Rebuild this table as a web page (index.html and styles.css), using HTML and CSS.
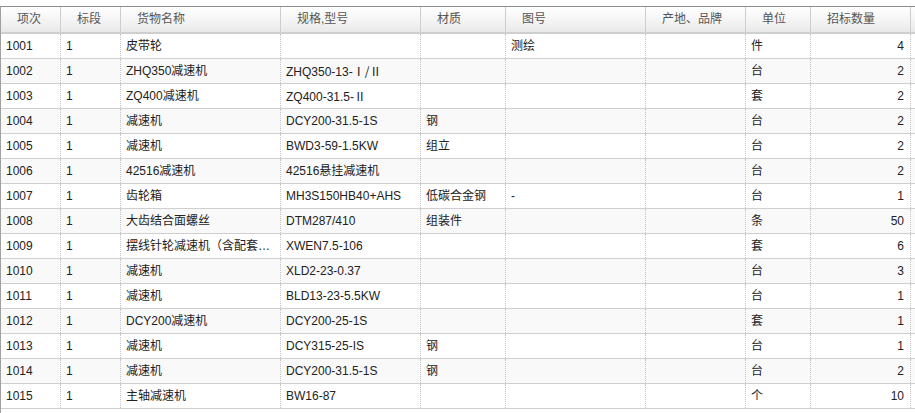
FILE: index.html
```html
<!DOCTYPE html>
<html lang="zh">
<head>
<meta charset="utf-8">
<link rel="stylesheet" href="styles.css">
</head>
<body>
<div class="grid">
  <div class="row head">
    <div class="cell">项次</div>
    <div class="cell">标段</div>
    <div class="cell">货物名称</div>
    <div class="cell">规格,型号</div>
    <div class="cell">材质</div>
    <div class="cell">图号</div>
    <div class="cell">产地、品牌</div>
    <div class="cell">单位</div>
    <div class="cell">招标数量</div>
    <div class="cell"></div>
  </div>
  <div class="row">
    <div class="cell">1001</div><div class="cell">1</div><div class="cell">皮带轮</div><div class="cell"></div><div class="cell"></div><div class="cell">测绘</div><div class="cell"></div><div class="cell">件</div><div class="cell num">4</div><div class="cell"></div>
  </div>
  <div class="row alt">
    <div class="cell">1002</div><div class="cell">1</div><div class="cell">ZHQ350减速机</div><div class="cell">ZHQ350-13-<span class="cjk">Ⅰ/Ⅱ</span></div><div class="cell"></div><div class="cell"></div><div class="cell"></div><div class="cell">台</div><div class="cell num">2</div><div class="cell"></div>
  </div>
  <div class="row">
    <div class="cell">1003</div><div class="cell">1</div><div class="cell">ZQ400减速机</div><div class="cell">ZQ400-31.5-<span class="cjk">Ⅱ</span></div><div class="cell"></div><div class="cell"></div><div class="cell"></div><div class="cell">套</div><div class="cell num">2</div><div class="cell"></div>
  </div>
  <div class="row alt">
    <div class="cell">1004</div><div class="cell">1</div><div class="cell">减速机</div><div class="cell">DCY200-31.5-1S</div><div class="cell">钢</div><div class="cell"></div><div class="cell"></div><div class="cell">台</div><div class="cell num">2</div><div class="cell"></div>
  </div>
  <div class="row">
    <div class="cell">1005</div><div class="cell">1</div><div class="cell">减速机</div><div class="cell">BWD3-59-1.5KW</div><div class="cell">组立</div><div class="cell"></div><div class="cell"></div><div class="cell">台</div><div class="cell num">2</div><div class="cell"></div>
  </div>
  <div class="row alt">
    <div class="cell">1006</div><div class="cell">1</div><div class="cell">42516减速机</div><div class="cell">42516悬挂减速机</div><div class="cell"></div><div class="cell"></div><div class="cell"></div><div class="cell">台</div><div class="cell num">2</div><div class="cell"></div>
  </div>
  <div class="row">
    <div class="cell">1007</div><div class="cell">1</div><div class="cell">齿轮箱</div><div class="cell">MH3S150HB40+AHS</div><div class="cell">低碳合金钢</div><div class="cell">-</div><div class="cell"></div><div class="cell">台</div><div class="cell num">1</div><div class="cell"></div>
  </div>
  <div class="row alt">
    <div class="cell">1008</div><div class="cell">1</div><div class="cell">大齿结合面螺丝</div><div class="cell">DTM287/410</div><div class="cell">组装件</div><div class="cell"></div><div class="cell"></div><div class="cell">条</div><div class="cell num">50</div><div class="cell"></div>
  </div>
  <div class="row">
    <div class="cell">1009</div><div class="cell">1</div><div class="cell">摆线针轮减速机（含配套电机）</div><div class="cell">XWEN7.5-106</div><div class="cell"></div><div class="cell"></div><div class="cell"></div><div class="cell">套</div><div class="cell num">6</div><div class="cell"></div>
  </div>
  <div class="row alt">
    <div class="cell">1010</div><div class="cell">1</div><div class="cell">减速机</div><div class="cell">XLD2-23-0.37</div><div class="cell"></div><div class="cell"></div><div class="cell"></div><div class="cell">台</div><div class="cell num">3</div><div class="cell"></div>
  </div>
  <div class="row">
    <div class="cell">1011</div><div class="cell">1</div><div class="cell">减速机</div><div class="cell">BLD13-23-5.5KW</div><div class="cell"></div><div class="cell"></div><div class="cell"></div><div class="cell">台</div><div class="cell num">1</div><div class="cell"></div>
  </div>
  <div class="row alt">
    <div class="cell">1012</div><div class="cell">1</div><div class="cell">DCY200减速机</div><div class="cell">DCY200-25-1S</div><div class="cell"></div><div class="cell"></div><div class="cell"></div><div class="cell">套</div><div class="cell num">1</div><div class="cell"></div>
  </div>
  <div class="row">
    <div class="cell">1013</div><div class="cell">1</div><div class="cell">减速机</div><div class="cell">DCY315-25-IS</div><div class="cell">钢</div><div class="cell"></div><div class="cell"></div><div class="cell">台</div><div class="cell num">1</div><div class="cell"></div>
  </div>
  <div class="row alt">
    <div class="cell">1014</div><div class="cell">1</div><div class="cell">减速机</div><div class="cell">DCY200-31.5-1S</div><div class="cell">钢</div><div class="cell"></div><div class="cell"></div><div class="cell">台</div><div class="cell num">2</div><div class="cell"></div>
  </div>
  <div class="row">
    <div class="cell">1015</div><div class="cell">1</div><div class="cell">主轴减速机</div><div class="cell">BW16-87</div><div class="cell"></div><div class="cell"></div><div class="cell"></div><div class="cell">个</div><div class="cell num">10</div><div class="cell"></div>
  </div>
</div>
</body>
</html>
```
FILE: styles.css
```css
html, body {
  margin: 0;
  padding: 0;
  background: #fff;
  overflow: hidden;
}
body {
  font-family: "Liberation Sans", Arial, "Noto Sans CJK SC", sans-serif;
  font-size: 12px;
  color: #222;
}
.grid {
  margin-top: 6px;
  width: 1100px;
  border-left: 1px solid #a0a0a0;
  border-top: 1px solid #8c8c8c;
  height: 420px;
}
.row {
  display: grid;
  grid-template-columns: 60px 60px 160px 140px 85px 140px 100px 65px 100px 190px;
  height: 25px;
  box-sizing: border-box;
  border-bottom: 1px solid #cfcfcf;
  background: #fff;
}
.row.alt {
  background: #f9f9f9;
}
.row.head {
  height: 27px;
  border-bottom: 2px solid #cfcfcf;
  background: linear-gradient(to bottom, #ffffff 0%, #f4f4f4 55%, #e9e9e9 100%);
  color: #555;
}
.cell {
  box-sizing: border-box;
  border-right: 1px dotted #c4c4c4;
  padding: 0 6px 0 5px;
  line-height: 24px;
  white-space: nowrap;
  overflow: hidden;
  text-overflow: ellipsis;
}
.head .cell {
  border-right: 1px solid #cdcdcd;
  padding-left: 16px;
  line-height: 25px;
}
.cell.num {
  text-align: right;
}
.cjk {
  font-family: "Noto Sans CJK SC", sans-serif;
}
```
